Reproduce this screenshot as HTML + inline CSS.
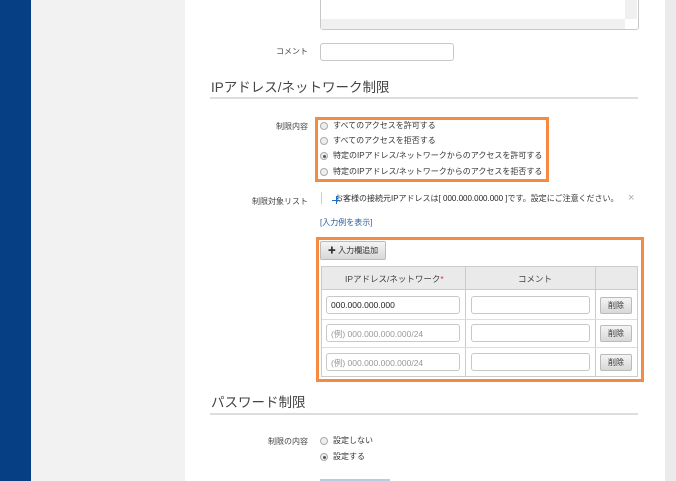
<!DOCTYPE html>
<html><head><meta charset="utf-8"><style>
*{margin:0;padding:0;box-sizing:border-box}
body{width:676px;height:481px;overflow:hidden;position:relative;background:#f2f2f2;font-family:"Liberation Sans","Noto Sans CJK JP",sans-serif;color:#333;font-size:8px}
.a{position:absolute}
.lbl{position:absolute;right:368px;font-size:8px;color:#444;white-space:nowrap}
.inp{position:absolute;background:#fff;border:1px solid #c8c8c8;border-radius:3px}
.h{position:absolute;left:211px;font-size:13.5px;color:#444;white-space:nowrap}
.line{position:absolute;left:210px;width:428px;height:2px;background:#ddd}
.r{position:absolute;width:8px;height:8px;border:1px solid #aaa;border-radius:50%;background:#eee}
.r.on::after{content:"";position:absolute;left:1.5px;top:1.5px;width:3px;height:3px;border-radius:50%;background:#555}
.rt{position:absolute;font-size:8px;color:#333;white-space:nowrap}
.box{position:absolute;border:3px solid #f58a42}
.btn{position:absolute;background:linear-gradient(#f4f4f4,#d8d8d8);border:1px solid #bbb;border-radius:2px;font-size:8px;color:#333;text-align:center}
.cell{position:absolute;font-size:8.5px;white-space:nowrap}
</style></head><body>
<div class="a" style="left:0;top:0;width:31px;height:481px;background:#073f85"></div>
<div class="a" style="left:185px;top:0;width:480px;height:481px;background:#fff"></div>
<div class="a" style="left:665px;top:0;width:11px;height:481px;background:#ebebeb"></div>

<div class="inp" style="left:320px;top:-4px;width:319px;height:34px;border-radius:3px"></div>
<div class="a" style="left:321px;top:19px;width:304px;height:10px;background:#f0f0f0"></div>
<div class="a" style="left:625px;top:0;width:12px;height:19px;background:#f0f0f0"></div>

<div class="lbl" style="top:46px">コメント</div>
<div class="inp" style="left:320px;top:43px;width:134px;height:18px"></div>

<div class="h" style="top:76px">IPアドレス/ネットワーク制限</div>
<div class="line" style="top:97px"></div>

<div class="lbl" style="top:121px">制限内容</div>
<div class="box" style="left:315px;top:117px;width:234px;height:65px"></div>
<div class="r" style="left:320px;top:122px"></div><div class="rt" style="left:333px;top:120px">すべてのアクセスを許可する</div>
<div class="r" style="left:320px;top:137px"></div><div class="rt" style="left:333px;top:135px">すべてのアクセスを拒否する</div>
<div class="r on" style="left:320px;top:152px"></div><div class="rt" style="left:333px;top:150px">特定のIPアドレス/ネットワークからのアクセスを許可する</div>
<div class="r" style="left:320px;top:168px"></div><div class="rt" style="left:333px;top:166px">特定のIPアドレス/ネットワークからのアクセスを拒否する</div>

<div class="lbl" style="top:196px">制限対象リスト</div>
<div class="a" style="left:321px;top:192px;width:1px;height:12px;background:#ccc"></div>
<div class="rt" style="left:335px;top:193px">お客様の接続元IPアドレスは[ <b style="font-weight:normal;color:#222">000.000.000.000</b> ]です。設定にご注意ください。</div>
<div class="a" style="left:332px;top:200px;width:8px;height:1px;background:#1a6fc9"></div>
<div class="a" style="left:336px;top:196px;width:1px;height:8px;background:#1a6fc9"></div>
<div class="rt" style="left:628px;top:192px;color:#aaa;font-size:11px">×</div>
<div class="rt" style="left:320px;top:217px;color:#2a5d9a">[入力例を表示]</div>

<div class="box" style="left:316px;top:237px;width:328px;height:145px"></div>
<div class="btn" style="left:320px;top:241px;width:66px;height:19px;line-height:17px"><b>✚</b> 入力欄追加</div>
<div class="a" style="left:321px;top:266px;width:317px;height:111px;border:1px solid #ccc;background:#fff"></div>
<div class="a" style="left:322px;top:267px;width:315px;height:23px;background:#eaeaea;border-bottom:1px solid #ccc"></div>
<div class="a" style="left:465px;top:267px;width:1px;height:109px;background:#ccc"></div>
<div class="a" style="left:595px;top:267px;width:1px;height:109px;background:#ccc"></div>
<div class="a" style="left:322px;top:319px;width:315px;height:1px;background:#ddd"></div>
<div class="a" style="left:322px;top:347px;width:315px;height:1px;background:#ddd"></div>
<div class="cell" style="left:345px;top:273px;color:#444">IPアドレス/ネットワーク<span style="color:#d33">*</span></div>
<div class="cell" style="left:518px;top:273px;color:#444">コメント</div>

<div class="inp" style="left:326px;top:296px;width:134px;height:18px"></div><div class="cell" style="left:331px;top:300px;color:#222">000.000.000.000</div>
<div class="inp" style="left:326px;top:324px;width:134px;height:18px"></div><div class="cell" style="left:331px;top:328px;color:#999">(例) 000.000.000.000/24</div>
<div class="inp" style="left:326px;top:353px;width:134px;height:18px"></div><div class="cell" style="left:331px;top:357px;color:#999">(例) 000.000.000.000/24</div>
<div class="inp" style="left:471px;top:296px;width:119px;height:18px"></div>
<div class="inp" style="left:471px;top:324px;width:119px;height:18px"></div>
<div class="inp" style="left:471px;top:353px;width:119px;height:18px"></div>
<div class="btn" style="left:600px;top:297px;width:32px;height:17px;line-height:15px">削除</div>
<div class="btn" style="left:600px;top:325px;width:32px;height:17px;line-height:15px">削除</div>
<div class="btn" style="left:600px;top:354px;width:32px;height:17px;line-height:15px">削除</div>

<div class="h" style="top:391px">パスワード制限</div>
<div class="line" style="top:413px"></div>
<div class="lbl" style="top:436px">制限の内容</div>
<div class="r" style="left:320px;top:437px"></div><div class="rt" style="left:333px;top:435px">設定しない</div>
<div class="r on" style="left:320px;top:453px"></div><div class="rt" style="left:333px;top:451px">設定する</div>
<div class="a" style="left:320px;top:479px;width:70px;height:2px;background:#b8cce4"></div>
</body></html>
